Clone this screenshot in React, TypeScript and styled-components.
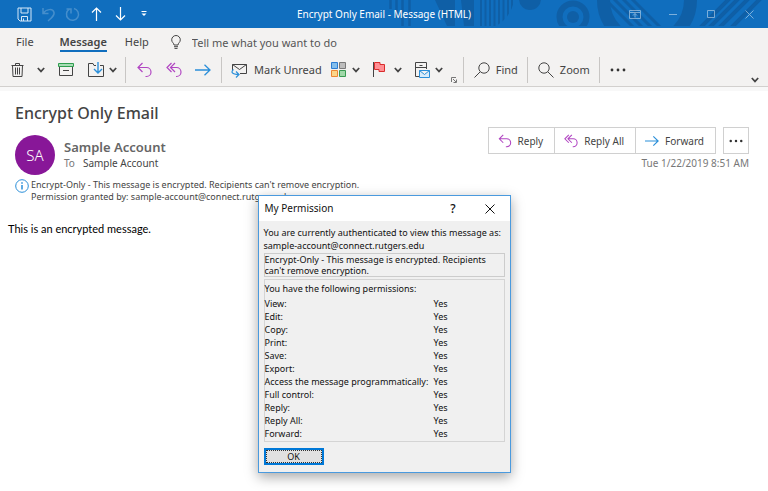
import React from "react";
import styled, { createGlobalStyle } from "styled-components";

const UI = `"Noto Sans", "Open Sans", sans-serif`;

const GlobalStyle = createGlobalStyle`
  *, *::before, *::after { box-sizing: border-box; }
  body { margin: 0; background: #fff; font-family: ${UI}; color: #444; overflow: hidden; }
  button, input { font: inherit; color: inherit; }
  button { background: none; border: 0; padding: 0; cursor: pointer; }
  svg { display: block; flex: none; }
`;

const Window = styled.div`
  position: relative;
  min-height: 100vh;
`;

const TitleBar = styled.header`
  position: relative;
  display: grid;
  grid-template-columns: 1fr auto 1fr;
  align-items: center;
  height: 28px;
  background: #106ebe;
  color: #fff;
`;

const TitlePattern = styled.svg`
  position: absolute;
  top: 0;
  right: 0;
`;

const QuickAccess = styled.div`
  display: flex;
  align-items: center;
  gap: 8px;
  padding-left: 16px;
`;

const QuickButton = styled.button<{ $dim?: boolean }>`
  display: flex;
  justify-content: center;
  width: 16px;
  opacity: ${(p) => (p.$dim ? 0.22 : 1)};
`;

const WindowTitle = styled.h1`
  position: relative;
  margin: 0;
  font-size: 10px;
  font-weight: 400;
`;

const WindowControls = styled.div`
  position: relative;
  display: flex;
  justify-content: flex-end;
  align-items: center;
  gap: 26px;
  padding-right: 13px;
  opacity: 0.45;
`;

const ControlButton = styled.button`
  display: flex;
  justify-content: center;
  width: 12px;
`;

const Ribbon = styled.div`
  background: #f3f2f1;
  border-bottom: 1px solid #d2d0ce;
`;

const Tabs = styled.nav`
  display: flex;
  align-items: center;
  height: 28px;
  padding-left: 16px;
  font-size: 11px;
`;

const Tab = styled.button<{ $active?: boolean; $gap: number }>`
  height: 20px;
  margin-right: ${(p) => p.$gap}px;
  border-bottom: 2px solid ${(p) => (p.$active ? "#106ebe" : "transparent")};
  font-weight: ${(p) => (p.$active ? 600 : 400)};
`;

const TellMe = styled.label`
  display: flex;
  align-items: center;
  gap: 11px;
`;

const TellMeInput = styled.input`
  width: 180px;
  border: 0;
  padding: 0;
  background: none;
  outline: none;
  &::placeholder { color: #555; opacity: 1; }
`;

const Toolbar = styled.div`
  display: flex;
  align-items: center;
  height: 30px;
  padding: 0 9px 3px;
  font-size: 11px;
`;

const Tool = styled.button<{ $gap?: number }>`
  display: flex;
  align-items: center;
  gap: 6px;
  margin-right: ${(p) => p.$gap ?? 12}px;
  white-space: nowrap;
`;

const Divider = styled.span<{ $gap?: number }>`
  width: 1px;
  height: 26px;
  margin-right: ${(p) => p.$gap ?? 10}px;
  background: #c8c6c4;
`;

const Launcher = styled.button`
  align-self: flex-end;
  margin-right: 6px;
`;

const Collapse = styled.button`
  align-self: flex-end;
  margin-left: auto;
`;

const Strip = styled.div`
  height: 4px;
  background: #f8f8f8;
`;

const Message = styled.main`
  padding: 10px 19px 0 15px;
`;

const Subject = styled.h2`
  margin: 0 0 10px;
  font-size: 16px;
  line-height: 24px;
  font-weight: 500;
`;

const Header = styled.div`
  display: flex;
  align-items: flex-start;
`;

const Avatar = styled.div`
  display: grid;
  place-items: center;
  width: 40px;
  height: 40px;
  margin-right: 9px;
  border-radius: 50%;
  background: #881798;
  color: #fff;
  font-size: 15px;
  font-weight: 300;
`;

const Sender = styled.div`
  flex: 1;
  padding-top: 2px;
`;

const SenderName = styled.div`
  font-size: 13px;
  line-height: 20px;
  font-weight: 600;
  color: #666;
`;

const Recipients = styled.div`
  display: flex;
  gap: 8px;
  font-size: 10px;
  line-height: 13px;
`;

const Muted = styled.span`
  color: #777;
`;

const Side = styled.div`
  display: flex;
  flex-direction: column;
  align-items: flex-end;
  margin-top: -8px;
`;

const Actions = styled.div`
  display: flex;
  height: 27px;
  font-size: 10px;
`;

const Action = styled.button`
  display: flex;
  align-items: center;
  gap: 6px;
  padding: 0 11px 0 9px;
  border: 1px solid #d0d0d0;
  & + & { border-left: 0; }
  svg { width: 14px; height: 14px; }
`;

const MoreAction = styled.button`
  display: grid;
  place-items: center;
  width: 26px;
  margin-left: 7px;
  border: 1px solid #d0d0d0;
  svg { width: 14px; }
`;

const Received = styled.time`
  margin-top: 2px;
  font-size: 10px;
  line-height: 15px;
  color: #777;
`;

const Notice = styled.div`
  display: flex;
  gap: 2px;
  margin-top: 4px;
  font-size: 9px;
  line-height: 12px;
`;

const Body = styled.p`
  margin: 18px 0 0 -7px;
  font-family: Lato, "Open Sans", sans-serif;
  font-size: 11px;
  line-height: 16px;
  color: #000;
`;

const Dialog = styled.section`
  position: absolute;
  top: 195px;
  left: 0;
  right: 0;
  width: 253px;
  margin: 0 auto;
  border: 1px solid #4a9ade;
  background: #f0f0f0;
  color: #111;
  font-size: 9px;
  line-height: 13px;
  box-shadow: 0 4px 12px rgba(0, 0, 0, 0.35);
`;

const DialogBar = styled.div`
  display: flex;
  align-items: center;
  height: 25px;
  padding: 0 15px 0 6px;
  background: #fff;
`;

const DialogTitle = styled.h3`
  flex: 1;
  margin: 0;
  font-size: 10px;
  font-weight: 400;
`;

const HelpButton = styled.button`
  margin-right: 29px;
  font-size: 12px;
  font-weight: 500;
`;

const DialogBody = styled.div`
  padding: 5px 5px 7px;
`;

const Intro = styled.p`
  margin: 0 0 1px;
`;

const Policy = styled.p`
  margin: 0 0 2px;
  border: 1px solid #ccc;
  line-height: 11px;
`;

const Group = styled.div`
  margin-bottom: 6px;
  padding: 2px 0 1px;
  border: 1px solid #d4d4d4;
`;

const Permissions = styled.table`
  width: 100%;
  border-collapse: collapse;
  caption { text-align: left; padding-bottom: 2px; }
  th { font-weight: 400; text-align: left; }
  th, td { padding: 0; height: 13px; line-height: 13px; }
  td { width: 70px; }
`;

const OkButton = styled.button`
  width: 60px;
  height: 17px;
  border: 2px solid #0078d7;
  background: #e1e1e1;
  outline: 1px dotted #333;
  outline-offset: -3px;
  line-height: 12px;
`;

const PURPLE = "#b146c2";
const BLUE = "#2b8fd9";

type IconProps = { w: number; h: number; color?: string; children: React.ReactNode };
const Icon = ({ w, h, color = "#444", children }: IconProps) => (
  <svg width={w} height={h} viewBox={`0 0 ${w} ${h}`} fill="none" stroke={color} aria-hidden="true">
    {children}
  </svg>
);

const Chevron = () => (
  <Icon w={8} h={6}><path d="M.8 1 4 4.4 7.2 1" strokeWidth="1.7" /></Icon>
);
const ReplyIcon = () => (
  <Icon w={15} h={16} color={PURPLE}><path d="M5.5 1 1 5.5 5.5 10M1 5.5h8.5a4.5 4.5 0 0 1 0 9H8.5" strokeWidth="1.2" /></Icon>
);
const ReplyAllIcon = () => (
  <Icon w={16} h={16} color={PURPLE}><path d="M5.5 1 1 5.5 5.5 10M9 1 4.5 5.5 9 10M4.5 5.5h6a4.5 4.5 0 0 1 0 9H10" strokeWidth="1.2" /></Icon>
);
const ForwardIcon = () => (
  <Icon w={16} h={12} color={BLUE}><path d="M0 6h15M9.5.7 15 6l-5.5 5.3" strokeWidth="1.3" /></Icon>
);
const Dots = () => (
  <svg width="16" height="4" viewBox="0 0 16 4" fill="#333" aria-hidden="true">
    <circle cx="2" cy="2" r="1.4" /><circle cx="8" cy="2" r="1.4" /><circle cx="14" cy="2" r="1.4" />
  </svg>
);
const SearchIcon = () => (
  <Icon w={16} h={16}><circle cx="6" cy="6" r="5.2" /><path d="m9.8 9.8 5.7 5.7" /></Icon>
);
const SearchLeftIcon = () => (
  <Icon w={16} h={16}><circle cx="10" cy="6" r="5.2" /><path d="M6.2 9.8.5 15.5" /></Icon>
);

const permissions = [
  "View:", "Edit:", "Copy:", "Print:", "Save:", "Export:",
  "Access the message programmatically:", "Full control:", "Reply:", "Reply All:", "Forward:",
];

export default function App() {
  return (
    <Window>
      <GlobalStyle />
      <TitleBar>
        <TitlePattern width="388" height="28" viewBox="380 0 388 28" aria-hidden="true">
          <defs>
            <clipPath id="band"><rect x="380" width="388" height="26" /></clipPath>
            <clipPath id="bars"><path d="M479 0h35c-2 12-8 20-18 26h-17z" /></clipPath>
          </defs>
          <g clipPath="url(#band)" fill="none" stroke="#0f5fa6">
            <path d="M390.500 0v9M396.500 0v18M402.500 0v26M409.500 0v26" strokeWidth="2.500" />
            <path d="M435 0h20v26h-8zM461 0h13v26h-10z" fill="#0f5fa6" stroke="none" />
            <path d="M481 0v26M485.500 0v26M490 0v26M494.500 0v26M499 0v26M503.500 0v26M508 0v26M512 0v26" strokeWidth="2" clipPath="url(#bars)" />
            <circle cx="530" cy="-1" r="11" fill="#0f5fa6" stroke="none" />
            <circle cx="573" cy="17" r="13.500" strokeWidth="6" />
            <circle cx="573" cy="17" r="6" fill="#0f5fa6" stroke="none" />
            <circle cx="647" cy="0" r="43.500" strokeWidth="13" />
            <path d="m608 2 28 28M612-3l32 32M620-4l32 32M629-4l32 32" strokeWidth="3" />
            <path d="m700 28 32-32M709 28l32-32M719 28l32-32M731 28l32-32" strokeWidth="4" />
          </g>
        </TitlePattern>
        <QuickAccess>
          <QuickButton aria-label="Save">
            <Icon w={15} h={15} color="#d6e8f8"><path d="M1 1h13v13H3l-2-2zM4 1v5h7V1M4.500 14V9.500h6V14M6.500 14v-2.500" /></Icon>
          </QuickButton>
          <QuickButton $dim aria-label="Undo">
            <Icon w={13} h={15} color="#fff"><path d="M1 1v5.500h5.500M1 6.500C4 2 11 1 12 5.500c.6 3-2 5-6 8.500" strokeWidth="1.500" /></Icon>
          </QuickButton>
          <QuickButton $dim aria-label="Redo">
            <Icon w={15} h={15} color="#fff"><path d="M1.500 2H6v4.500M9 1.500a6 6 0 1 1-4.500.6" strokeWidth="1.500" /></Icon>
          </QuickButton>
          <QuickButton aria-label="Previous item">
            <Icon w={11} h={14} color="#fff"><path d="M5.500 14V1M1 5.500 5.500 1 10 5.500" strokeWidth="1.200" /></Icon>
          </QuickButton>
          <QuickButton aria-label="Next item">
            <Icon w={11} h={14} color="#fff"><path d="M5.500 0v13M1 8.500 5.500 13 10 8.500" strokeWidth="1.200" /></Icon>
          </QuickButton>
          <QuickButton aria-label="Customize toolbar">
            <Icon w={6} h={6} color="#fff"><path d="M.5.500h5" /><path d="M.5 2.500h5L3 5z" fill="#fff" stroke="none" /></Icon>
          </QuickButton>
        </QuickAccess>
        <WindowTitle>Encrypt Only Email - Message (HTML)</WindowTitle>
        <WindowControls>
          <ControlButton aria-label="Ribbon display options">
            <Icon w={12} h={9} color="#fff"><path d="M.5.500h11v8H.5zM.5 2.500h11M6 7.500V3.500M4 5.500l2-2 2 2" /></Icon>
          </ControlButton>
          <ControlButton aria-label="Minimize"><Icon w={8} h={8} color="#fff"><path d="M0 4.500h8" /></Icon></ControlButton>
          <ControlButton aria-label="Maximize"><Icon w={8} h={8} color="#fff"><path d="M.5.500h7v7h-7z" /></Icon></ControlButton>
          <ControlButton aria-label="Close"><Icon w={9} h={9} color="#fff"><path d="m.5.500 8 8M8.500.500l-8 8" /></Icon></ControlButton>
        </WindowControls>
      </TitleBar>

      <Ribbon>
        <Tabs>
          <Tab $gap={26}>File</Tab>
          <Tab $active $gap={18}>Message</Tab>
          <Tab $gap={22}>Help</Tab>
          <TellMe>
            <Icon w={10} h={14}><path d="M3 10C3 8 .7 7.500.7 4.800a4.300 4.300 0 0 1 8.600 0C9.300 7.500 7 8 7 10zM3 11.700h4M3.500 13.400h3" /></Icon>
            <TellMeInput aria-label="Tell me what you want to do" placeholder="Tell me what you want to do" />
          </TellMe>
        </Tabs>
        <Toolbar>
          <Tool aria-label="Delete">
            <Icon w={16} h={16}><path d="M2.500 3.500h12M6.500 3.500v-2h4v2M3.500 3.500l.5 11h9l.5-11M6.500 5.500v7M8.500 5.500v7M10.500 5.500v7" /></Icon>
          </Tool>
          <Tool aria-label="Delete options" $gap={13}><Chevron /></Tool>
          <Tool aria-label="Archive" $gap={14}>
            <Icon w={16} h={13}><path d="M1.500 4v8.500h13V4M5 7.500h6" /><path d="M.5.500h15v3H.5z" stroke="#2f9e4f" fill="#a9dcb6" /></Icon>
          </Tool>
          <Tool aria-label="Move" $gap={5}>
            <Icon w={16} h={16}><path d="M8 3.500H6L5 1.500H.5v13h15v-11H12" /><path d="M10 0v10.500M6 7l4 4 4-4" stroke={BLUE} strokeWidth="1.400" /></Icon>
          </Tool>
          <Tool aria-label="Move options" $gap={8}><Chevron /></Tool>
          <Divider $gap={11} />
          <Tool aria-label="Reply" $gap={14}><ReplyIcon /></Tool>
          <Tool aria-label="Reply all" $gap={13}><ReplyAllIcon /></Tool>
          <Tool aria-label="Forward" $gap={10}><ForwardIcon /></Tool>
          <Divider $gap={9} />
          <Tool $gap={9}>
            <Icon w={17} h={16}><path d="M1.500 8V2.500h14v9H9M1.500 2.500l7 5 7-5" /><path d="M2.500 7.500C-.5 10 1 12.500 7.500 12.500M5 9.500l3 3-3 3" stroke={BLUE} strokeWidth="1.200" /></Icon>
            Mark Unread
          </Tool>
          <Tool aria-label="Categorize" $gap={6}>
            <Icon w={15} h={15}>
              <path d="M.5.500h6v6h-6z" stroke="#2b7cd3" fill="#83beec" />
              <path d="M8.500.500h6v6h-6z" stroke="#7a7a7a" fill="#bdbdbd" />
              <path d="M.5 8.500h6v6h-6z" stroke="#ed8733" fill="#fbd68a" />
              <path d="M8.500 8.500h6v6h-6z" stroke="#3a9a52" fill="#a0d8a8" />
            </Icon>
          </Tool>
          <Tool aria-label="Category options" $gap={13}><Chevron /></Tool>
          <Tool aria-label="Follow up" $gap={9}>
            <Icon w={12} h={15}><path d="M.5 0v15" /><path d="M1.500.500H7v2h4.500v7H6v-2H1.500z" stroke="#d92c2c" fill="#ff8f94" /></Icon>
          </Tool>
          <Tool aria-label="Follow up options" $gap={13}><Chevron /></Tool>
          <Tool aria-label="Rules" $gap={5}>
            <Icon w={15} h={16}><path d="M5 14.500H.5V.500h11V7M.5 5.500h11M4.500 3.500h3" /><path d="M4.500 8.500h10v7h-10zM4.500 8.500l5 4 5-4" stroke={BLUE} fill="#d8ecfb" /></Icon>
          </Tool>
          <Tool aria-label="Rules options" $gap={8}><Chevron /></Tool>
          <Launcher aria-label="More options">
            <Icon w={6} h={6} color="#777"><path d="M.5 5V.500H5M2 2l3 3M5.500 2.500v3h-3" /></Icon>
          </Launcher>
          <Divider />
          <Tool $gap={9}><SearchLeftIcon />Find</Tool>
          <Divider />
          <Tool $gap={9}><SearchIcon />Zoom</Tool>
          <Divider />
          <Tool aria-label="More commands"><Dots /></Tool>
          <Collapse aria-label="Collapse ribbon"><Chevron /></Collapse>
        </Toolbar>
      </Ribbon>
      <Strip />

      <Message>
        <Subject>Encrypt Only Email</Subject>
        <Header>
          <Avatar>SA</Avatar>
          <Sender>
            <SenderName>Sample Account</SenderName>
            <Recipients><Muted>To</Muted><span>Sample Account</span></Recipients>
          </Sender>
          <Side>
            <Actions>
              <Action><ReplyIcon />Reply</Action>
              <Action><ReplyAllIcon />Reply All</Action>
              <Action><ForwardIcon />Forward</Action>
              <MoreAction aria-label="More actions"><Dots /></MoreAction>
            </Actions>
            <Received>Tue 1/22/2019 8:51 AM</Received>
          </Side>
        </Header>
        <Notice>
          <Icon w={14} h={14} color={BLUE}><circle cx="7" cy="7" r="6.300" /><path d="M7 6v4.500M7 3.300v1.500" strokeWidth="1.500" /></Icon>
          <div>
            Encrypt-Only - This message is encrypted. Recipients can't remove encryption.
            <br />
            Permission granted by: sample-account@connect.rutgers.edu
          </div>
        </Notice>
        <Body>This is an encrypted message.</Body>
      </Message>

      <Dialog role="dialog" aria-labelledby="dialog-title">
        <DialogBar>
          <DialogTitle id="dialog-title">My Permission</DialogTitle>
          <HelpButton aria-label="Help">?</HelpButton>
          <button aria-label="Close">
            <Icon w={10} h={10} color="#111"><path d="m.5.500 9 9M9.500.500l-9 9" /></Icon>
          </button>
        </DialogBar>
        <DialogBody>
          <Intro>
            You are currently authenticated to view this message as:
            <br />
            sample-account@connect.rutgers.edu
          </Intro>
          <Policy>Encrypt-Only - This message is encrypted. Recipients can't remove encryption.</Policy>
          <Group>
            <Permissions>
              <caption>You have the following permissions:</caption>
              <tbody>
                {permissions.map((name) => (
                  <tr key={name}><th scope="row">{name}</th><td>Yes</td></tr>
                ))}
              </tbody>
            </Permissions>
          </Group>
          <OkButton>OK</OkButton>
        </DialogBody>
      </Dialog>
    </Window>
  );
}
